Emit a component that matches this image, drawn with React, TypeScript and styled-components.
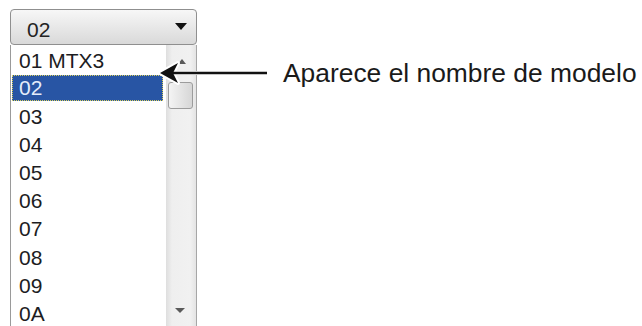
import React from "react";
import styled, { createGlobalStyle } from "styled-components";

const Global = createGlobalStyle`
  html, body { margin: 0; padding: 0; background: #ffffff; }
  body { font-family: "Liberation Sans", Arial, sans-serif; }
`;

const Page = styled.div`
  position: relative;
  width: 642px;
  height: 326px;
  overflow: hidden;
  box-sizing: border-box;
  padding: 9px 0 0 10px;
  background: #fff;
`;

const Dropdown = styled.div`
  width: 187px;
  display: flex;
  flex-direction: column;
`;

const Combo = styled.div`
  height: 36px;
  box-sizing: border-box;
  border: 1px solid #8f8f8f;
  border-radius: 4px;
  background: linear-gradient(#f7f7f7, #e8e8e8 50%, #d9d9d9);
  display: flex;
  align-items: center;
  justify-content: space-between;
  padding: 5px 9px 0 16px;
  font-size: 21px;
  color: #232323;
`;

const ComboArrow = styled.span`
  width: 0;
  height: 0;
  border-left: 6px solid transparent;
  border-right: 6px solid transparent;
  border-top: 7px solid #111;
  margin-top: -7px;
`;

const ListBox = styled.div`
  height: 281px;
  display: flex;
  border-left: 1px solid #9a9a9a;
  border-right: 1px solid #a6a6a6;
  background: #fff;
`;

const Items = styled.div`
  flex: 1;
  padding-top: 2.5px;
  display: flex;
  flex-direction: column;
`;

const Item = styled.div`
  height: 28.17px;
  flex: none;
  display: flex;
  align-items: flex-start;
`;

const Label = styled.span<{ $selected?: boolean }>`
  flex: 1;
  height: 26px;
  box-sizing: border-box;
  margin: ${(p) => (p.$selected ? "-0.5px 3px 0 1px" : "0 3px 0 1px")};
  padding-left: 6px;
  display: flex;
  align-items: center;
  font-size: 21px;
  color: ${(p) => (p.$selected ? "#e4ecfa" : "#1c1c22")};
  background: ${(p) => (p.$selected ? "#2855a4" : "transparent")};
  border: 1px dotted ${(p) => (p.$selected ? "#d9cf5e" : "transparent")};
`;

const ScrollBar = styled.div`
  width: 30px;
  display: flex;
  flex-direction: column;
  background: linear-gradient(90deg, #dedede, #efefef 20%, #f1f1f1 80%, #e4e4e4);
`;

const ScrollButton = styled.div`
  height: 32px;
  flex: none;
  display: flex;
  align-items: center;
  justify-content: center;
`;

const UpGlyph = styled.span`
  width: 0;
  height: 0;
  margin-left: 2px;
  border-left: 4px solid transparent;
  border-right: 4px solid transparent;
  border-bottom: 5px solid #5a5a5a;
`;

const DownGlyph = styled.span`
  width: 0;
  height: 0;
  margin-left: -2px;
  border-left: 5px solid transparent;
  border-right: 5px solid transparent;
  border-top: 5px solid #5a5a5a;
`;

const Thumb = styled.div`
  height: 27px;
  margin: 5px 3px 0 2px;
  box-sizing: border-box;
  border: 1px solid #9c9c9c;
  border-radius: 3px;
  background: linear-gradient(90deg, #f4f4f4, #e2e2e2 60%, #d6d6d6);
`;

const Track = styled.div`
  flex: 1;
`;

const Callout = styled.div`
  position: absolute;
  left: 156px;
  top: 58px;
  display: flex;
  align-items: center;
  gap: 11px;
`;

const Note = styled.span`
  font-family: "Liberation Sans", Arial, sans-serif;
  font-size: 26.4px;
  line-height: 30px;
  color: #1a1a1a;
  white-space: nowrap;
`;

const items = ["01 MTX3", "02", "03", "04", "05", "06", "07", "08", "09", "0A"];

export default function App() {
  return (
    <Page>
      <Global />
      <Dropdown>
        <Combo>
          <span>02</span>
          <ComboArrow />
        </Combo>
        <ListBox>
          <Items>
            {items.map((t) => (
              <Item key={t}>
                <Label $selected={t === "02"}>{t}</Label>
              </Item>
            ))}
          </Items>
          <ScrollBar>
            <ScrollButton>
              <UpGlyph />
            </ScrollButton>
            <Thumb />
            <Track />
            <ScrollButton>
              <DownGlyph />
            </ScrollButton>
          </ScrollBar>
        </ListBox>
      </Dropdown>
      <Callout>
        <svg width="116" height="30" viewBox="0 0 116 30">
          <g stroke="#ffffff" strokeWidth="4" strokeLinejoin="round" fill="#ffffff">
            <path d="M4 15 L22 5 L17 15 L22 25 Z" />
            <line x1="17" y1="15" x2="111" y2="15" />
          </g>
          <path d="M4 15 L22 5 L17 15 L22 25 Z" fill="#111" />
          <line x1="16" y1="15" x2="111" y2="15" stroke="#111" strokeWidth="2.4" />
        </svg>
        <Note>Aparece el nombre de modelo</Note>
      </Callout>
    </Page>
  );
}
